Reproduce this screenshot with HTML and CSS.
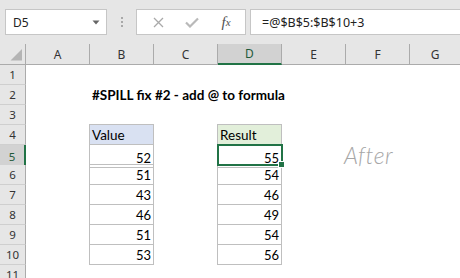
FILE: index.html
```html
<!DOCTYPE html>
<html>
<head>
<meta charset="utf-8">
<link rel="stylesheet" href="styles.css">
</head>
<body>
<div class="app">
  <div class="bar">
    <div class="namebox"><span>D5</span><svg class="caret" width="8" height="5" viewBox="0 0 8 5"><polygon points="0.5,0.5 7.5,0.5 4,4.5" fill="#666"/></svg></div>
    <div class="grip"><i></i><i></i><i></i></div>
    <div class="fxbox">
      <span class="slot"><svg width="11" height="11" viewBox="0 0 11 11"><path d="M1 1 L10 10 M10 1 L1 10" stroke="#a9a9a9" stroke-width="1.3" fill="none"/></svg></span>
      <span class="slot"><svg width="14" height="11" viewBox="0 0 14 11"><path d="M1 5.5 L5 9.5 L13 1.5" stroke="#b9b9b9" stroke-width="2.2" fill="none"/></svg></span>
      <span class="slot fx"><i>f</i><span class="x">x</span></span>
    </div>
    <div class="formula">=@$B$5:$B$10+3</div>
  </div>
  <div class="sheet">
    <div class="row hdr">
      <div class="corner"><svg width="25" height="20" viewBox="0 0 25 20"><polygon points="10.5,16.5 22,16.5 22,5" fill="#b4b4b4"/></svg></div>
      <div class="ch">A</div><div class="ch">B</div><div class="ch">C</div><div class="ch sel">D</div><div class="ch">E</div><div class="ch">F</div><div class="ch last">G</div>
    </div>
    <div class="row"><div class="rh">1</div><div class="c"></div><div class="c"></div><div class="c"></div><div class="c"></div><div class="c"></div><div class="c"></div><div class="c"></div></div>
    <div class="row"><div class="rh">2</div><div class="c"></div><div class="c title">#SPILL fix #2 - add @ to formula</div><div class="c"></div><div class="c"></div><div class="c"></div><div class="c"></div><div class="c"></div></div>
    <div class="row"><div class="rh">3</div><div class="c"></div><div class="c"></div><div class="c"></div><div class="c"></div><div class="c"></div><div class="c"></div><div class="c"></div></div>
    <div class="row"><div class="rh">4</div><div class="c"></div><div class="c t vh">Value</div><div class="c"></div><div class="c t rs">Result</div><div class="c"></div><div class="c"></div><div class="c"></div></div>
    <div class="row"><div class="rh sel">5</div><div class="c"></div><div class="c t num">52</div><div class="c"></div><div class="c t num cur">55<span class="selbox"><span class="handle"></span></span></div><div class="c"></div><div class="c"><span class="after">After</span></div><div class="c"></div></div>
    <div class="row"><div class="rh">6</div><div class="c"></div><div class="c t num">51</div><div class="c"></div><div class="c t num">54</div><div class="c"></div><div class="c"></div><div class="c"></div></div>
    <div class="row"><div class="rh">7</div><div class="c"></div><div class="c t num">43</div><div class="c"></div><div class="c t num">46</div><div class="c"></div><div class="c"></div><div class="c"></div></div>
    <div class="row"><div class="rh">8</div><div class="c"></div><div class="c t num">46</div><div class="c"></div><div class="c t num">49</div><div class="c"></div><div class="c"></div><div class="c"></div></div>
    <div class="row"><div class="rh">9</div><div class="c"></div><div class="c t num">51</div><div class="c"></div><div class="c t num">54</div><div class="c"></div><div class="c"></div><div class="c"></div></div>
    <div class="row"><div class="rh">10</div><div class="c"></div><div class="c t num">53</div><div class="c"></div><div class="c t num">56</div><div class="c"></div><div class="c"></div><div class="c"></div></div>
    <div class="row"><div class="rh">11</div><div class="c"></div><div class="c"></div><div class="c"></div><div class="c"></div><div class="c"></div><div class="c"></div><div class="c"></div></div>
  </div>
</div>
</body>
</html>
```
FILE: styles.css
```css
* { box-sizing: border-box; margin: 0; padding: 0; }
html, body { width: 460px; height: 278px; overflow: hidden; background: #fff; }
body { font-family: "Lato", "Liberation Sans", sans-serif; color: #000; }
.app { width: 460px; }

.bar { height: 44px; background: #e6e6e6; display: flex; align-items: flex-start; padding-top: 9px; overflow: hidden; }
.namebox { margin-left: 5px; width: 102px; height: 26px; background: #fff; border: 1px solid #c6c6c6; display: flex; align-items: center; justify-content: space-between; padding: 0 6px 0 7px; font: 12px "Noto Sans", sans-serif; color: #222; }
.caret { display: block; }
.grip { width: 29px; height: 26px; display: flex; flex-direction: column; align-items: center; justify-content: center; gap: 2px; }
.grip i { display: block; width: 2px; height: 2px; background: #a8a8a8; }
.fxbox { width: 110px; height: 26px; background: #fff; border: 1px solid #c6c6c6; display: flex; align-items: center; padding-left: 4px; }
.slot { width: 34px; display: flex; justify-content: center; align-items: center; }
.slot svg { display: block; }
.fx { font-family: "Liberation Serif", serif; color: #505050; font-size: 15px; }
.fx i { font-style: italic; }
.fx .x { font-size: 11px; font-style: italic; }
.formula { margin-left: 4px; flex: 1 0 auto; height: 26px; background: #fff; border: 1px solid #c6c6c6; border-right: none; padding-left: 11px; display: flex; align-items: center; font: 12.5px "Noto Sans", sans-serif; color: #222; }

.row { display: grid; grid-template-columns: 26px repeat(6, 64px) 1fr; height: 20px; }
.row.hdr { height: 21px; }
.corner { background: #e6e6e6; border-right: 1px solid #ababab; border-bottom: 1px solid #ababab; }
.corner svg { display: block; }
.ch { background: #e6e6e6; border-right: 1px solid #ababab; border-bottom: 1px solid #ababab; display: flex; align-items: center; justify-content: center; font: 12px "Noto Sans", sans-serif; color: #333; }
.ch.last { border-right: none; }
.ch.sel { background: #d2d2d2; border-bottom: 2px solid #217346; color: #1f5a3a; }
.rh { background: #e6e6e6; border-right: 1px solid #ababab; border-bottom: 1px solid #cfcfcf; display: flex; align-items: center; justify-content: center; font: 11.5px "Noto Sans", sans-serif; color: #333; }
.rh.sel { background: #d2d2d2; border-right: 2px solid #217346; color: #1f5a3a; }

.c { display: flex; align-items: flex-end; padding: 0 2px 2px 2px; font-size: 13px; line-height: 16px; white-space: nowrap; position: relative; min-width: 0; }
.t { margin: -1px 0 0 -1px; border: 1px solid #bfbfbf; padding-bottom: 1px; }
.num { justify-content: flex-end; }
.vh { background: #d9e1f2; font-size: 13.5px; }
.rs { background: #e2efda; font-size: 13.5px; }
.title { font-weight: 700; font-size: 13.5px; }
.cur { z-index: 2; }
.selbox { position: absolute; left: -1px; top: -1px; width: 66px; height: 22px; border: 2px solid #217346; }
.handle { position: absolute; left: 59px; top: 15px; width: 7px; height: 7px; background: #217346; border: 1px solid #fff; }
.after { margin-left: -4px; margin-bottom: 1px; font-size: 23px; line-height: 20px; font-style: italic; font-weight: 300; color: #a6a6a6; letter-spacing: 0.5px; }
```
